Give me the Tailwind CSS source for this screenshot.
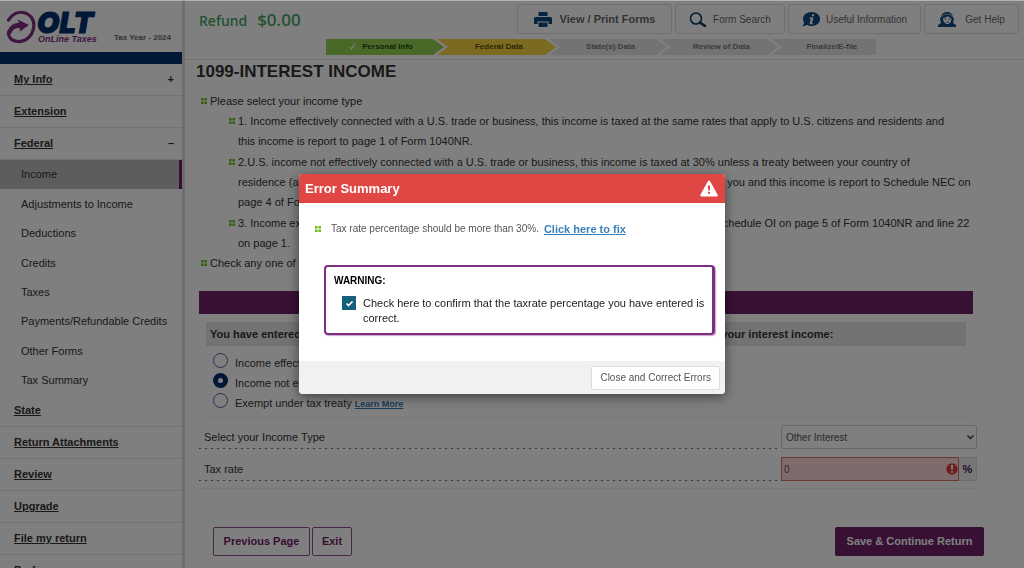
<!DOCTYPE html>
<html lang="en">
  <head>
    <meta charset="UTF-8" />
    <meta name="viewport" content="width=device-width, initial-scale=1.0" />
    <title>OLT OnLine Taxes - 1099-Interest Income</title>
    <script src="https://cdn.jsdelivr.net/npm/@tailwindcss/browser@4"></script>
  </head>
  <body class="bg-white font-['Liberation_Sans',Arial,sans-serif] text-[11px] text-[#333]">
    <!-- bullet used by every list -->
    <svg class="hidden">
      <symbol id="bullet" viewBox="0 0 6 6">
        <path d="M0 0h2.6v2.6H0zM3.4 0H6v2.6H3.4zM0 3.4h2.6V6H0zM3.4 3.4H6V6H3.4z" fill="#6fbe1e" />
      </symbol>
    </svg>

    <div class="flex h-screen overflow-hidden">
      <!-- sidebar -->
      <aside class="w-[185px] shrink-0 overflow-hidden border-r-3 border-[#dadada]">
        <div class="flex h-[52px] items-end justify-between pr-[11px] pb-2 pl-[6px]">
          <svg class="h-[34px] w-[94px]" viewBox="0 0 94 34">
            <path d="M2.500 10C6 4 12 1.500 17 2.500c8 1.500 12 8 10.500 15.500C26 27 19 32 12 31.500 5 31 1 26 3 21" fill="none" stroke="#812c82" stroke-width="3.200" stroke-linecap="round" />
            <path d="M1.500 24C2 17 7 12.500 13 13l-1.500-3.500L23 15l-9 6.500-.5-3.500C9 17.500 6.500 19.500 5 24z" fill="#812c82" />
            <text x="31" y="23" font-family="Inter, sans-serif" font-size="29" font-weight="900" font-style="italic" fill="#002f6c" stroke="#002f6c">OLT</text>
            <text x="32" y="32" font-family="Liberation Sans, sans-serif" font-size="9" font-weight="700" font-style="italic" fill="#812c82">OnLine Taxes</text>
          </svg>
          <span class="text-[8px] font-bold text-[#666]">Tax Year - 2024</span>
        </div>
        <div class="h-[12px] bg-[#002f6c]"></div>
        <nav class="text-[11px]">
          <div class="flex h-8 items-center justify-between border-b border-[#e4e4e4] pr-2 pl-[14px] font-bold"><a href="#" class="underline">My Info</a><span>+</span></div>
          <div class="flex h-8 items-center border-b border-[#e4e4e4] pl-[14px] font-bold"><a href="#" class="underline">Extension</a></div>
          <div class="flex h-8 items-center justify-between border-b border-[#e4e4e4] pr-2 pl-[14px] font-bold"><a href="#" class="underline">Federal</a><span>–</span></div>
          <ul class="grid h-[235px] grid-rows-8">
            <li class="flex items-center border-r-3 border-[#6e2169] bg-[#bbb] pl-[21px]"><a href="#">Income</a></li>
            <li class="flex items-center pl-[21px]"><a href="#">Adjustments to Income</a></li>
            <li class="flex items-center pl-[21px]"><a href="#">Deductions</a></li>
            <li class="flex items-center pl-[21px]"><a href="#">Credits</a></li>
            <li class="flex items-center pl-[21px]"><a href="#">Taxes</a></li>
            <li class="flex items-center pl-[21px]"><a href="#">Payments/Refundable Credits</a></li>
            <li class="flex items-center pl-[21px]"><a href="#">Other Forms</a></li>
            <li class="flex items-center pl-[21px]"><a href="#">Tax Summary</a></li>
          </ul>
          <div class="flex h-8 items-center border-b border-[#e4e4e4] pl-[14px] font-bold"><a href="#" class="underline">State</a></div>
          <div class="flex h-8 items-center border-b border-[#e4e4e4] pl-[14px] font-bold"><a href="#" class="underline">Return Attachments</a></div>
          <div class="flex h-8 items-center border-b border-[#e4e4e4] pl-[14px] font-bold"><a href="#" class="underline">Review</a></div>
          <div class="flex h-8 items-center border-b border-[#e4e4e4] pl-[14px] font-bold"><a href="#" class="underline">Upgrade</a></div>
          <div class="flex h-8 items-center border-b border-[#e4e4e4] pl-[14px] font-bold"><a href="#" class="underline">File my return</a></div>
          <div class="flex h-8 items-center border-b border-[#e4e4e4] pl-[14px] font-bold"><a href="#" class="underline">Preferences</a></div>
        </nav>
      </aside>

      <main class="min-w-0 flex-1">
        <!-- top bar -->
        <header class="h-[60px] border-b border-[#e4e4e4] pt-1">
          <div class="flex justify-between pr-[5px] pl-[14px]">
            <p class="flex items-baseline gap-[10px] pt-1 font-['Noto_Sans',sans-serif] font-medium text-[#3fa35c]">
              <span class="text-[14px] leading-6">Refund</span><span class="text-[17px] leading-6">$0.00</span>
            </p>
            <div class="flex gap-[3px] text-[10px] text-[#666]">
              <button class="flex h-[30px] w-[155px] items-center justify-center gap-2 rounded border border-[#ddd] text-[11px] font-bold">
                <svg class="h-[15px] w-[18px]" viewBox="0 0 18 15" fill="#0b4a80"><path d="M4.500 0h9v4h-9zM1.500 5h15q1.500 0 1.500 1.500V12h-3.500V9.500h-11V12H0V6.500Q0 5 1.500 5zM4.500 10.500h9V15h-9z" /></svg>
                View / Print Forms
              </button>
              <button class="flex h-[30px] w-[110px] items-center justify-center gap-[6px] rounded border border-[#ddd]">
                <svg class="h-[15px] w-[18px]" viewBox="0 0 18 15" fill="none" stroke="#0b3a66"><circle cx="7" cy="6.500" r="5.500" stroke-width="1.600" /><path d="M11 10.500l5 3.500" stroke-width="2.600" stroke-linecap="round" /></svg>
                Form Search
              </button>
              <button class="flex h-[30px] w-[133px] items-center justify-center gap-[6px] rounded border border-[#ddd]">
                <svg class="h-[15px] w-[18px]" viewBox="0 0 18 15"><path d="M9.500 0c5 0 8.500 3 8.500 7s-3.500 7-8.500 7q-2.500 0-4.500-1L.5 14.500l1.700-3.700Q1 9 1 7c0-4 3.500-7 8.500-7z" fill="#0b4a80" /><path d="M10.300 2.300h2l-.5 2h-2zM8 5.500h3.500L10 11h1l-.3 1.200H7.500L8.700 7H7.600z" fill="#fff" /></svg>
                Useful Information
              </button>
              <button class="flex h-[30px] w-[95px] items-center justify-center gap-[9px] rounded border border-[#ddd]">
                <svg class="h-[15px] w-[18px]" viewBox="0 0 18 15"><path d="M3 5C4 1 6.500 0 9 0s5 1 6 5l1 2-1 4 3 2v2H0v-2l3-2-1-4z" fill="#0b4a80" /><path d="M5 6c2-.4 4-1 5-2 1 1.500 2 2 3.500 2.200C13.500 9.500 12 12 9.500 12S5 9.500 5 6z" fill="#fff" /><path d="M4 5Q4.500 2 9 2t5.500 3" fill="none" stroke="#fff" stroke-width=".6" /><path d="M6.500 7h2M10.500 7h2M8 10h3" stroke="#0b4a80" stroke-width=".8" /></svg>
                Get Help
              </button>
            </div>
          </div>
          <ol class="mt-[5px] flex pl-[141px] text-center text-[8px] leading-4 font-bold text-[#777]">
            <li class="w-[118px] bg-[#95d04f] pr-2 text-[#234d12] [clip-path:polygon(0_0,calc(100%-11px)_0,100%_50%,calc(100%-11px)_100%,0_100%)]">
              <svg class="mr-1 inline h-[7px] w-[7px]" viewBox="0 0 7 7" fill="none" stroke="#fff" stroke-width="1.200"><path d="M1 4l1.500 2L6 0.500" /></svg>
              Personal Info
            </li>
            <li class="-ml-[7px] w-[119px] bg-[#fbd443] pl-[5px] text-[#5c4a0c] [clip-path:polygon(0_0,calc(100%-11px)_0,100%_50%,calc(100%-11px)_100%,0_100%,11px_50%)]">Federal Data</li>
            <li class="-ml-[7px] w-[118px] bg-[#e6e6e6] pl-[5px] [clip-path:polygon(0_0,calc(100%-11px)_0,100%_50%,calc(100%-11px)_100%,0_100%,11px_50%)]">State(s) Data</li>
            <li class="-ml-[7px] w-[118px] bg-[#e6e6e6] pl-[5px] [clip-path:polygon(0_0,calc(100%-11px)_0,100%_50%,calc(100%-11px)_100%,0_100%,11px_50%)]">Review of Data</li>
            <li class="-ml-[7px] w-[105px] bg-[#e6e6e6] pl-[17px] [clip-path:polygon(0_0,100%_0,100%_100%,0_100%,11px_50%)]">Finalize/E-file</li>
          </ol>
        </header>

        <h1 class="pl-[11px] text-[17px] leading-6 font-bold">1099-INTEREST INCOME</h1>

        <!-- instructions -->
        <ul class="mt-[7px] pr-10 pl-4 leading-5">
          <li class="flex gap-[3px]">
            <svg class="mt-[7px] h-[6px] w-[6px] shrink-0"><use href="#bullet" /></svg>
            <p>Please select your income type</p>
          </li>
          <li>
            <ul class="flex flex-col gap-px pl-7">
              <li class="flex gap-[3px]">
                <svg class="mt-[7px] h-[6px] w-[6px] shrink-0"><use href="#bullet" /></svg>
                <p>1. Income effectively connected with a U.S. trade or business, this income is taxed at the same rates that apply to U.S. citizens and residents and<br />this income is report to page 1 of Form 1040NR.</p>
              </li>
              <li class="flex gap-[3px]">
                <svg class="mt-[7px] h-[6px] w-[6px] shrink-0"><use href="#bullet" /></svg>
                <p>2.U.S. income not effectively connected with a U.S. trade or business, this income is taxed at 30% unless a treaty between your country of<br />residence (as a nonresident of the United States) and the U.S. has a lower rate of tax that applies to you and this income is report to Schedule NEC on<br />page 4 of Form 1040NR.</p>
              </li>
              <li class="flex gap-[3px]">
                <svg class="mt-[7px] h-[6px] w-[6px] shrink-0"><use href="#bullet" /></svg>
                <p>3. Income exempt from tax under an income tax treaty between your country and the US is on the Schedule OI on page 5 of Form 1040NR and line 22<br />on page 1.</p>
              </li>
            </ul>
          </li>
          <li class="flex gap-[3px]">
            <svg class="mt-[7px] h-[6px] w-[6px] shrink-0"><use href="#bullet" /></svg>
            <p>Check any one of the boxes below</p>
          </li>
        </ul>

        <!-- form -->
        <form class="mt-[18px] pr-[47px] pl-[14px]">
          <div class="mr-1 h-[23px] bg-[#6e2169]"></div>
          <fieldset class="mt-2 mr-[11px] ml-[7px] border-b border-[#f0f0f0] pb-[5px]">
            <h2 class="bg-[#e6e6e6] pl-1 leading-6 font-bold">You have entered an amount of interest income in this form. Please select the type that describes your interest income:</h2>
            <div class="mt-[7px] flex flex-col gap-[2px] pl-[7px] leading-[15px]">
              <div class="flex gap-[7px]">
                <input id="type1" name="type" type="radio" class="h-[15px] w-[15px] appearance-none rounded-full border border-[#4a6a9c] checked:border-5 checked:border-[#002f6c]" />
                <label for="type1" class="mt-[3px]">Income effectively connected</label>
              </div>
              <div class="flex gap-[7px]">
                <input id="type2" name="type" type="radio" checked class="h-[15px] w-[15px] appearance-none rounded-full border border-[#4a6a9c] checked:border-5 checked:border-[#002f6c]" />
                <label for="type2" class="mt-[3px]">Income not effectively connected</label>
              </div>
              <div class="flex gap-[7px]">
                <input id="type3" name="type" type="radio" class="h-[15px] w-[15px] appearance-none rounded-full border border-[#4a6a9c] checked:border-5 checked:border-[#002f6c]" />
                <p class="mt-[3px]"><label for="type3">Exempt under tax treaty</label> <a href="#" class="text-[9px] font-bold text-[#337ab7] underline">Learn More</a></p>
              </div>
            </div>
          </fieldset>

          <div class="mt-[7px] flex">
            <label for="incomeType" class="flex-1 bg-[linear-gradient(90deg,#666_2px,transparent_2px)] bg-[length:6px_1px] bg-bottom bg-repeat-x pl-[5px] leading-6">Select your Income Type</label>
            <div class="relative w-[196px]">
              <select id="incomeType" class="block h-6 w-full appearance-none rounded-xs border border-[#ccc] px-1 text-[10px] text-[#555]">
                <option>Other Interest</option>
              </select>
              <svg class="pointer-events-none absolute top-[10px] right-[3px] h-[5px] w-[7px]" viewBox="0 0 7 5" fill="none" stroke="#333" stroke-width="1.300"><path d="M.5.500l3 3 3-3" /></svg>
            </div>
          </div>
          <div class="mt-2 flex">
            <label for="taxRate" class="flex-1 bg-[linear-gradient(90deg,#666_2px,transparent_2px)] bg-[length:6px_1px] bg-bottom bg-repeat-x pl-[5px] leading-6">Tax rate</label>
            <div class="relative flex w-[196px]">
              <input id="taxRate" type="text" value="0" class="h-6 w-[178px] border border-[#d9706c] bg-[#fcd9d9] px-[2px] text-[10px] text-[#555]" />
              <svg class="absolute top-[6px] left-[165px] h-[12px] w-[12px]" viewBox="0 0 12 12"><circle cx="6" cy="6" r="5.700" fill="#e23a36" /><path d="M4.800 2h2.400l-.5 5H5.300zM5.200 8h1.600v1.700H5.200z" fill="#fff" /></svg>
              <span class="w-[18px] border border-l-0 border-[#ddd] bg-[#eee] text-center leading-[22px] font-bold text-[#3d1a45]">%</span>
            </div>
          </div>
          <div class="mt-[7px] border-t border-[#f0f0f0]"></div>
        </form>

        <div class="mt-[38px] flex gap-[2px] pr-10 pl-7 font-bold">
          <button class="h-[29px] w-[97px] rounded-xs border border-[#8c4f8c] text-[#6e2169]">Previous Page</button>
          <button class="h-[29px] w-[40px] rounded-xs border border-[#8c4f8c] text-[#6e2169]">Exit</button>
          <button class="ml-auto h-[29px] w-[149px] rounded-xs bg-[#6e2169] text-white">Save &amp; Continue Return</button>
        </div>
      </main>
    </div>

    <!-- error modal -->
    <div class="fixed inset-0 flex items-start justify-center border-t border-white/40 bg-black/50 pt-[173px]">
      <div role="dialog" aria-labelledby="errorTitle" class="w-full max-w-[426px] overflow-hidden rounded bg-white shadow-[0_3px_12px_rgba(0,0,0,0.5)]">
        <div class="flex h-[29px] items-center justify-between bg-[#e04643] pr-[7px] pl-[6px] text-white">
          <h2 id="errorTitle" class="text-[13px] font-bold">Error Summary</h2>
          <svg class="h-[17px] w-[18px]" viewBox="0 0 18 17"><path d="M9 .5q.7 0 1.100.8l7.500 13.400q.6 1.800-1.100 1.800h-15Q-.2 16.500.4 14.700L7.900 1.300Q8.300.5 9 .5z" fill="#fff" /><path d="M7.800 5.500h2.400l-.4 5H8.200zM8 11.800h2v2H8z" fill="#e04643" /></svg>
        </div>
        <div class="px-[10px] pt-[18px] pb-[26px]">
          <p class="flex items-center pl-[6px] leading-4">
            <svg class="mr-[10px] h-[6px] w-[6px]"><use href="#bullet" /></svg>
            <span class="mr-[5px] text-[10px] text-[#555]">Tax rate percentage should be more than 30%.</span>
            <a href="#" class="font-bold text-[#3a80bd] underline">Click here to fix</a>
          </p>
          <div class="mt-[28px] ml-[15px] rounded-sm border-2 border-r-3 border-[#7d2f80] pt-[6px] pr-1 pb-[7px] pl-2 shadow-[1px_1px_1px_#c9a3ca]">
            <p class="text-[10px] leading-4 font-bold text-black">WARNING:</p>
            <div class="mt-[7px] flex gap-[7px] pl-2">
              <span class="relative h-[14px] w-[14px] shrink-0">
                <input id="confirmRate" type="checkbox" checked class="block h-[14px] w-[14px] appearance-none bg-[#16607e]" />
                <svg class="pointer-events-none absolute inset-0 h-[14px] w-[14px]" viewBox="0 0 14 14" fill="none" stroke="#fff" stroke-width="1.700"><path d="M4.500 7.500l2 2 4-4" /></svg>
              </span>
              <label for="confirmRate" class="leading-[15px] text-[#222]">Check here to confirm that the taxrate percentage you have entered is correct.</label>
            </div>
          </div>
        </div>
        <div class="flex h-[33px] items-center justify-end bg-[#f1f1f1] pr-[5px]">
          <button class="h-[24px] rounded-xs border border-[#ddd] bg-white px-2 text-[10px] text-[#555]">Close and Correct Errors</button>
        </div>
      </div>
    </div>
  </body>
</html>
